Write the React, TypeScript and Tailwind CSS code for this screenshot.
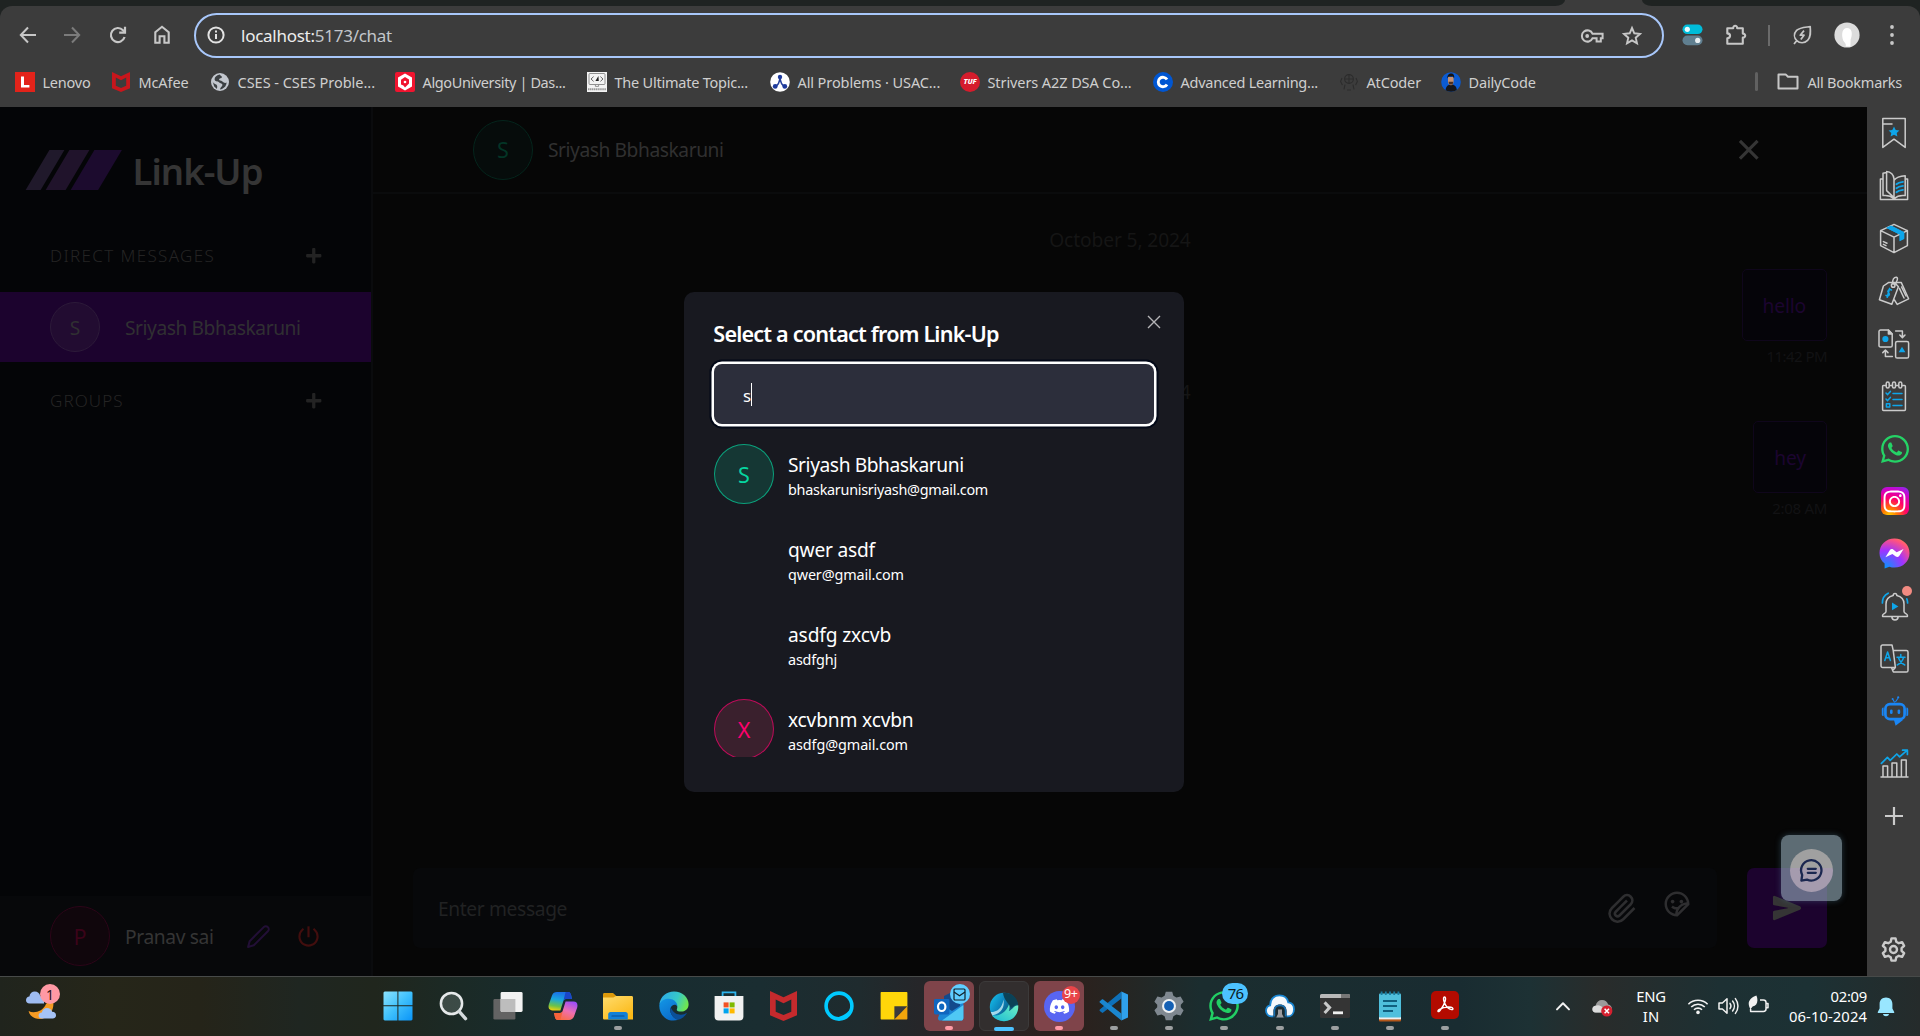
import type { ReactNode } from "react";
import { FaDiscord, FaInstagram, FaPlus, FaWhatsapp } from "react-icons/fa";
import { FiEdit2 } from "react-icons/fi";
import { GrAttachment } from "react-icons/gr";
import { IoPowerSharp, IoSend } from "react-icons/io5";
import { RiCloseFill, RiEmojiStickerLine } from "react-icons/ri";

/* ---------- shared marks ---------- */

function McAfeeMark({ color, className }: { color: string; className: string }) {
  return (
    <svg viewBox="0 0 18 20" className={className} preserveAspectRatio="none">
      <path
        fill={color}
        fillRule="evenodd"
        d="M0 0L9 4.2L18 0V16.2L9 20L0 16.2ZM3.8 5.6V13.8L9 16L14.2 13.8V5.6L9 8.2Z"
      />
    </svg>
  );
}

/* ---------- browser toolbar ---------- */

function TabStrip() {
  return (
    <div className="flex h-[6px] shrink-0 bg-[#3c3c3c]">
      <div className="w-[1565px] rounded-br-[10px_6px] bg-[#1f2322]" />
      <div className="w-[77px]" />
      <div className="flex-1 rounded-bl-[10px_6px] bg-[#1f2322]" />
    </div>
  );
}

function Toolbar() {
  return (
    <div className="bg-[#1f2322]">
      <div className="flex h-[58px] items-center rounded-t-[12px] bg-[#3c3c3c] pl-[17px] text-[#c7c7c7]">
        <svg width="22" height="22" viewBox="0 0 22 22" fill="none" stroke="currentColor" strokeWidth="2">
          <path d="M19 11H4M11 3.5L3.8 11L11 18.5" />
        </svg>
        <svg className="ml-[22px] text-[#7b7b7b]" width="22" height="22" viewBox="0 0 22 22" fill="none" stroke="currentColor" strokeWidth="2">
          <path d="M3 11H18M11 3.5L18.2 11L11 18.5" />
        </svg>
        <svg className="ml-[24px]" width="22" height="22" viewBox="0 0 22 22" fill="none" stroke="currentColor" strokeWidth="2.2">
          <path d="M17.6 13A7 7 0 1 1 16 6.2L18 8.4" />
          <path d="M18 2.8V8.6H12.2" />
        </svg>
        <svg className="ml-[22px]" width="22" height="22" viewBox="0 0 22 22" fill="none" stroke="currentColor" strokeWidth="2.1">
          <path d="M4.3 18.8V8.2L11 2.8L17.7 8.2V18.8H13.4V12.2H8.6V18.8Z" />
        </svg>
        <div className="ml-[21px] flex h-[45px] w-[1470px] items-center rounded-full border-[2.5px] border-[#a8c7fa] pl-[11px]">
          <svg width="18" height="18" viewBox="0 0 18 18" fill="none" stroke="#e3e3e3" strokeWidth="2">
            <circle cx="9" cy="9" r="7.6" />
            <path d="M9 8V13M9 4.6V6.5" />
          </svg>
          <span className="ml-[16px] mt-[1px] text-[17px] leading-5 tracking-[-0.26px] text-[#c3c6cb]">
            <span className="text-[#ededed]">localhost:</span>5173/chat
          </span>
          <svg className="ml-auto mt-[1px]" width="24" height="16" viewBox="0 0 24 16" fill="none" stroke="#c7c7c7" strokeWidth="2">
            <path d="M12.6 5.8H22.6V10.2H20.8V13.4H16.6V10.2H12.6A5.6 5.6 0 1 1 12.6 5.8Z" />
            <circle cx="7.2" cy="8" r="1.9" fill="#c7c7c7" stroke="none" />
          </svg>
          <svg className="ml-[17px] mr-[19px] mt-[1px]" width="22" height="22" viewBox="0 0 22 22" fill="none" stroke="#c7c7c7" strokeWidth="1.9">
            <path d="M11 3L13.3 8.3L19 8.9L14.7 12.7L16 18.4L11 15.4L6 18.4L7.3 12.7L3 8.9L8.7 8.3Z" />
          </svg>
        </div>
        <svg className="ml-[18px]" width="21" height="22" viewBox="0 0 21 22">
          <rect x="0.5" y="0.5" width="20" height="9.6" rx="4.8" fill="#00bcd9" />
          <circle cx="5.3" cy="5.3" r="2.6" fill="#e6fbff" />
          <rect x="0.5" y="11.6" width="20" height="9.6" rx="4.8" fill="#607f90" />
          <circle cx="15.7" cy="16.4" r="2.6" fill="#e8eef1" />
        </svg>
        <svg className="ml-[21px]" width="24" height="24" viewBox="0 0 24 24" fill="none" stroke="#c7c7c7" strokeWidth="2.1" strokeLinejoin="round">
          <path d="M3.3 5.2H9.2C9 2 13.4 2 13.2 5.2H18.8V10.6C22 10.4 22 14.8 18.8 14.6V20.8H3.3V15.4C7 14.8 7 10.8 3.3 10.4Z" />
        </svg>
        <div className="ml-[20px] h-[21px] w-[1.5px] bg-[#6b6b6b]" />
        <svg className="ml-[21px]" width="22" height="24" viewBox="0 0 22 24" fill="none" stroke="#c7c7c7" strokeWidth="1.7" strokeLinejoin="round">
          <path d="M19.2 3.6C19.6 9 20 14 16.6 17.4C13.4 20.6 8.6 20.4 5.8 17.6C3 14.8 2.6 10.6 5.6 7.4C8.6 4.4 13.6 4.4 19.2 3.6ZM5.8 17.6L3 21" />
          <path d="M13 7.6L9.2 12.2H13L9.8 16.6" />
        </svg>
        <svg className="ml-[21px]" width="26" height="26" viewBox="0 0 26 26">
          <circle cx="13" cy="13" r="12.6" fill="#dcdcdc" />
          <path d="M9.2 18.5C7 12 8.4 6 13 6C18.2 6 18.8 12.4 16.6 17.4L16.4 24.6H11.6C12.6 21.8 10.4 20.6 9.2 18.5Z" fill="#fff" />
        </svg>
        <svg className="ml-[29px]" width="6" height="22" viewBox="0 0 6 22" fill="#c7c7c7">
          <circle cx="3" cy="3" r="1.9" />
          <circle cx="3" cy="11" r="1.9" />
          <circle cx="3" cy="19" r="1.9" />
        </svg>
      </div>
    </div>
  );
}

const favicons = {
  lenovo: (
    <svg viewBox="0 0 20 20" className="size-5">
      <rect width="20" height="20" fill="#e2231a" />
      <path d="M6 4.4H9V13H14.4V15.6H6Z" fill="#fff" />
    </svg>
  ),
  mcafee: <McAfeeMark color="#c8161c" className="mx-px h-5 w-[18px]" />,
  globe: (
    <svg viewBox="0 0 20 20" className="size-5">
      <circle cx="10" cy="10" r="9" fill="#c3c7ce" />
      <path d="M9.6 2.4C6.4 3.4 4.4 5 4.6 7.4C5 9.6 7.4 8.8 9 10.2C10.2 11.4 12.6 11.2 12.4 13.2C12 14.8 10.4 15 10 17.4L12 17C14.6 15.8 16.6 13.6 16.6 10.6C14.8 11.4 13.6 10.4 12.4 9.4C11 8.6 9.4 8.8 9 7.6C9.2 6.2 11.6 6.6 12 5C12 4 10.4 3.6 9.6 2.4Z" fill="#3c4043" />
      <path d="M2.6 9.6C4 12.6 6.2 11.8 7 13.4C7.6 15 6.8 15.8 7 17L4.2 14.6Z" fill="#3c4043" />
    </svg>
  ),
  algo: (
    <svg viewBox="0 0 20 20" className="size-5">
      <rect width="20" height="20" rx="2" fill="#f0142f" />
      <path d="M10 1.4L17 5.6V14.4L10 18.6L3 14.4V5.6Z" fill="#fff" />
      <path d="M10 5L14 7.6V11.6L10 15.4L8.4 13.4L6 12.6V7.8Z" fill="#f0142f" />
      <circle cx="10" cy="10" r="1.3" fill="#fff" />
    </svg>
  ),
  topics: (
    <svg viewBox="0 0 20 20" className="size-5">
      <rect width="20" height="20" fill="#f3f3f3" />
      <rect x="2" y="1.5" width="16" height="11" rx="1" fill="none" stroke="#777" strokeWidth="0.8" />
      <path d="M6.6 4.6L4 7L6.6 9.4M13.4 4.6L16 7L13.4 9.4" stroke="#555" strokeWidth="0.9" fill="none" />
      <path d="M8.4 9L11.4 4L11.8 9Z" fill="#222" />
      <path d="M8.4 12.6V14.4H11.6V12.6" stroke="#888" strokeWidth="0.9" fill="none" />
      <path d="M1 17.2H19" stroke="#999" strokeWidth="2" strokeDasharray="1.4 0.5" fill="none" />
    </svg>
  ),
  usaco: (
    <svg viewBox="0 0 20 20" className="size-5">
      <circle cx="10" cy="10" r="9.8" fill="#fff" />
      <path d="M5.4 14.4C8 13.4 9.6 10 10 5.4C10.4 10 12 13.4 14.6 14.4" fill="none" stroke="#26409a" strokeWidth="1.5" />
      <circle cx="10" cy="5" r="2.2" fill="#1e3a9c" />
      <circle cx="5.2" cy="14.4" r="2.4" fill="#1e3a9c" />
      <circle cx="14.8" cy="14.4" r="2.4" fill="#1e3a9c" />
    </svg>
  ),
  tuf: (
    <span className="flex size-5 items-center justify-center rounded-full bg-[#d51c2c] text-[7.5px] font-extrabold italic leading-none tracking-[-0.2px] text-white">
      TUF
    </span>
  ),
  coursera: (
    <svg viewBox="0 0 20 20" className="size-5">
      <circle cx="10" cy="10" r="10" fill="#0056d2" />
      <path d="M14 7.6A4.7 4.7 0 1 0 14 12.4" fill="none" stroke="#fff" strokeWidth="2.9" />
    </svg>
  ),
  atcoder: (
    <svg viewBox="0 0 20 20" className="size-5" fill="none" stroke="#2c2c2c" strokeWidth="1.1">
      <circle cx="10" cy="7" r="4.4" />
      <path d="M10 2.6V11.4M6 7H14M3 6L1.6 9.4L3.4 13M17 6L18.4 9.4L16.6 13M6 12.6L5 17.4M14 12.6L15 17.4M8 18H12" />
    </svg>
  ),
  daily: (
    <svg viewBox="0 0 20 20" className="size-5">
      <clipPath id="dailyClip">
        <circle cx="10" cy="10" r="9.8" />
      </clipPath>
      <g clipPath="url(#dailyClip)">
        <rect width="20" height="20" fill="#0b5bd3" />
        <path d="M4.5 20C4.5 14.4 6.6 12.4 10 12.4C13.8 12.4 16 14.6 16 20Z" fill="#15161b" />
        <path d="M7 5H12.6V10C12.4 12 11.4 13.2 10 13.2C8.4 13.2 7.2 12 7 10Z" fill="#c69374" />
        <path d="M6.4 6.6C6 2.8 8 1.4 10 1.4C12.6 1.4 13.8 3.4 13 6.6L12 4.6H7.6Z" fill="#17130f" />
        <path d="M7.4 9.8H12.4L11.6 12.6H8.4Z" fill="#4a3023" />
      </g>
    </svg>
  ),
};

function Bookmark({ icon, width, children }: { icon: ReactNode; width: string; children: ReactNode }) {
  return (
    <div className={`flex shrink-0 items-center gap-[7.5px] whitespace-nowrap ${width}`}>
      <span className="flex size-5 shrink-0 items-center justify-center">{icon}</span>
      {children}
    </div>
  );
}

function BookmarksBar() {
  return (
    <div className="flex h-[43px] shrink-0 items-center bg-[#3c3c3c] pb-[8px] pl-[15px] text-[14.5px] leading-5 text-[#cfcfcf]">
      <Bookmark icon={favicons.lenovo} width="w-[96px]"><span className="tracking-[-0.23px]">Lenovo</span></Bookmark>
      <Bookmark icon={favicons.mcafee} width="w-[99px]"><span className="tracking-[-0.12px]">McAfee</span></Bookmark>
      <Bookmark icon={favicons.globe} width="w-[185px]"><span className="tracking-[-0.02px]">CSES - CSES Proble...</span></Bookmark>
      <Bookmark icon={favicons.algo} width="w-[192px]"><span className="tracking-[-0.38px]">AlgoUniversity | Das...</span></Bookmark>
      <Bookmark icon={favicons.topics} width="w-[183px]"><span className="tracking-[-0.23px]">The Ultimate Topic...</span></Bookmark>
      <Bookmark icon={favicons.usaco} width="w-[190px]"><span className="tracking-[-0.1px]">All Problems · USAC...</span></Bookmark>
      <Bookmark icon={favicons.tuf} width="w-[193px]"><span className="tracking-[-0.09px]">Strivers A2Z DSA Co...</span></Bookmark>
      <Bookmark icon={favicons.coursera} width="w-[186px]"><span className="tracking-[-0.26px]">Advanced Learning...</span></Bookmark>
      <Bookmark icon={favicons.atcoder} width="w-[102px]"><span className="tracking-[-0.15px]">AtCoder</span></Bookmark>
      <Bookmark icon={favicons.daily} width="w-[100px]"><span className="tracking-[-0.15px]">DailyCode</span></Bookmark>
      <div className="ml-auto h-[19px] w-[2.5px] rounded-full bg-[#616161]" />
      <svg className="ml-[19px]" width="22" height="20" viewBox="0 0 22 20" fill="none" stroke="#c7c7c7" strokeWidth="2">
        <path d="M1.5 3.4V16.6H20.5V4.8H11L8.6 2.4H1.5Z" strokeLinejoin="round" />
      </svg>
      <span className="ml-[9px] mr-[18px] tracking-[-0.24px]">All Bookmarks</span>
    </div>
  );
}

/* ---------- chat page ---------- */

function SectionTitle({ children }: { children: ReactNode }) {
  return (
    <div className="flex h-[50px] items-center justify-between pl-[50px] pr-[49px] text-[17px] font-light leading-5 text-[#242424]">
      {children}
      <FaPlus className="size-[17.5px] text-[#232323]" />
    </div>
  );
}

function Sidebar() {
  return (
    <aside className="flex w-[373px] shrink-0 flex-col border-r-[2.5px] border-[#0a0b0d] bg-[#040507]">
      <div className="mt-[43px] flex h-10 items-center pl-[25px]">
        <svg width="97.5" height="40" viewBox="0 0 78 32" fill="none">
          <path d="M55.5 0H77.5L58.5 32H36.5L55.5 0Z" fill="#1c0b2e" />
          <path d="M35.5 0H51.5L32.5 32H16.5L35.5 0Z" fill="#20132b" />
          <path d="M19.5 0H31.5L12.5 32H0.5L19.5 0Z" fill="#20192b" />
        </svg>
        <span className="ml-[10px] mt-[2px] text-[36.5px] font-semibold leading-10 tracking-[-0.97px] text-[#353535]">Link-Up</span>
      </div>
      <div className="mt-[41px]">
        <SectionTitle><span className="tracking-[1.35px]">DIRECT MESSAGES</span></SectionTitle>
      </div>
      <div className="mt-[11px] flex h-[70px] items-center bg-[#1c032e] pl-[50px] text-[19.2px] leading-[30px] text-[#303032]">
        <div className="flex size-[50px] items-center justify-center rounded-full border border-[#2c1a39] bg-[#220c31] pt-[2px]">S</div>
        <span className="ml-[25px] mt-[2px] tracking-[-0.43px]">Sriyash Bbhaskaruni</span>
      </div>
      <div className="mt-[14px]">
        <SectionTitle><span className="tracking-[1.1px]">GROUPS</span></SectionTitle>
      </div>
      <div className="mt-auto flex h-20 items-center bg-[#07080a] pl-[50px]">
        <div className="flex size-[60px] items-center justify-center rounded-full border border-[#2c0418] bg-[#10060c] pt-[2px] text-[21.5px] text-[#3a0319]">P</div>
        <span className="ml-[15px] mt-[2px] w-[121px] text-[19.2px] leading-[30px] tracking-[-0.37px] text-[#353535]">Pranav sai</span>
        <FiEdit2 className="size-[25px] text-[#220f36]" />
        <IoPowerSharp className="ml-[25px] size-[25px] text-[#420e0e]" />
      </div>
    </aside>
  );
}

function Message({ children, time, tracking }: { children: ReactNode; time: string; tracking: string }) {
  return (
    <div className="flex flex-col items-end">
      <div className="flex h-[72px] items-center rounded-[5px] border border-[#0f061b] bg-[#050409] px-[20px] pt-[2px] text-[19.2px] tracking-[-0.15px] text-[#1c0530]">
        {children}
      </div>
      <div className={`mt-[5px] text-[15px] leading-5 text-[#121214] ${tracking}`}>{time}</div>
    </div>
  );
}

function Conversation() {
  return (
    <main className="flex min-w-0 flex-1 flex-col bg-[#060606]">
      <header className="flex h-[87px] shrink-0 items-center border-b-[2.5px] border-[#0a0b0c] pl-[100px] pr-[100px]">
        <div className="flex size-[60px] items-center justify-center rounded-full border border-[#04251c] bg-[#060c0b] pt-[2px] text-[21.5px] text-[#033526]">S</div>
        <span className="ml-[15px] mt-[1px] text-[19.2px] leading-[30px] tracking-[-0.43px] text-[#303030]">Sriyash Bbhaskaruni</span>
        <RiCloseFill className="ml-auto size-[37.5px] text-[#353535]" />
      </header>
      <div className="flex flex-1 flex-col pl-[40px] pr-[40px] pt-[31px]">
        <div className="text-center text-[19.2px] leading-[30px] tracking-[-0.12px] text-[#151515]">October 5, 2024</div>
        <div className="mt-[14px]">
          <Message time="11:42 PM" tracking="tracking-[-0.55px]">hello</Message>
        </div>
        <div className="mt-[11px] text-center text-[19.2px] leading-[30px] tracking-[-0.12px] text-[#151515]">October 6, 2024</div>
        <div className="mt-[14px]">
          <Message time="2:08 AM" tracking="tracking-[-0.3px]">hey</Message>
        </div>
      </div>
      <div className="mb-[28px] flex h-20 shrink-0 gap-[30px] pl-[40px] pr-[40px]">
        <div className="flex flex-1 items-center rounded-[7px] bg-[#07080a] pl-[25px] text-[19.2px] leading-[30px] text-[#212223]">
          <span className="mt-[2px] tracking-[-0.36px]">Enter message</span>
          <GrAttachment className="ml-auto size-[30px] [&_path]:stroke-[#2e2e30]" />
          <RiEmojiStickerLine className="mb-[9px] ml-[25px] mr-[25px] size-[30px] text-[#2e2e30]" />
        </div>
        <div className="flex w-20 items-center justify-center rounded-[7px] bg-[#1c032e]">
          <IoSend className="size-[30px] text-[#353535]" />
        </div>
      </div>
    </main>
  );
}

const contacts = [
  { name: "Sriyash Bbhaskaruni", mail: "bhaskarunisriyash@gmail.com", nameFit: "tracking-[-0.42px]", mailFit: "tracking-[-0.27px]", letter: "S", tone: "border-[#06d6a0aa] bg-[#06d6a02a] text-[#06d6a0]" },
  { name: "qwer asdf", mail: "qwer@gmail.com", nameFit: "tracking-[-0.22px]", mailFit: "tracking-[-0.14px]", letter: "", tone: "border-transparent" },
  { name: "asdfg zxcvb", mail: "asdfghj", nameFit: "tracking-[-0.15px]", mailFit: "tracking-[-0.18px]", letter: "", tone: "border-transparent" },
  { name: "xcvbnm xcvbn", mail: "asdfg@gmail.com", nameFit: "tracking-[-0.18px]", mailFit: "tracking-[-0.09px]", letter: "X", tone: "border-[#ff006faa] bg-[#3a202d] text-[#ff006e]" },
];

function ContactDialog() {
  return (
    <div className="absolute left-[684px] top-[185px] flex size-[500px] flex-col rounded-[10px] bg-[#181920] p-[30px] text-white">
      <h2 className="-ml-[0.7px] mt-[1px] whitespace-nowrap text-[21.6px] font-semibold leading-[22.5px] tracking-[-0.81px]">Select a contact from Link-Up</h2>
      <svg className="absolute right-[23px] top-[23px]" width="14" height="14" viewBox="0 0 14 14" stroke="#b4b4b7" strokeWidth="1.4">
        <path d="M1 1L13 13M13 1L1 13" />
      </svg>
      <div className="mt-[18.5px] flex h-[60px] shrink-0 items-center rounded-[8px] bg-[#2c2e3b] pl-[29px] text-[16.8px] leading-5 shadow-[0_0_0_2.5px_#fff,0_0_0_4.5px_#020817]">
        <span className="mt-[3px]">s</span>
        <span className="h-[23px] w-[1.25px] bg-white" />
      </div>
      <div className="mt-[20px] flex h-[313px] flex-col gap-[25px] overflow-hidden">
        {contacts.map((c) => (
          <div key={c.mail} className="flex h-[60px] shrink-0 items-center gap-[14px]">
            <div className={`flex size-[60px] items-center justify-center rounded-full border pt-[2px] text-[21.5px] ${c.tone}`}>{c.letter}</div>
            <div className="flex flex-col pt-[1px]">
              <span className={`text-[19.2px] leading-[30px] ${c.nameFit}`}>{c.name}</span>
              <span className={`text-[14.4px] leading-5 ${c.mailFit}`}>{c.mail}</span>
            </div>
          </div>
        ))}
      </div>
    </div>
  );
}

function FloatingWidget() {
  return (
    <div className="absolute left-[1781px] top-[728px] flex h-[66px] w-[61px] items-center justify-center rounded-[8px] bg-[#a5c1d08c] pt-[5px] shadow-[0_0_6px_#4f7f9966]">
      <div className="flex size-[43px] items-center justify-center rounded-full bg-[linear-gradient(#a0a0a0_0_44%,#a59bae_44%)]">
        <svg width="25" height="25" viewBox="0 0 25 25" fill="none" stroke="#1b2750" strokeWidth="2.3" strokeLinecap="round" strokeLinejoin="round">
          <path d="M2.4 22.6L3.2 17A10.2 10.2 0 1 1 8 21.6Z" />
          <path d="M8.8 10.8H16.8M8.8 14.8H16.8" />
        </svg>
      </div>
    </div>
  );
}

/* ---------- browser side panel ---------- */

const line = { fill: "none", stroke: "#cbcbcb", strokeWidth: 1.5, strokeLinejoin: "round" as const, strokeLinecap: "round" as const };

const sideIcons: ReactNode[] = [
  <svg key="bookmark" width="26" height="32" viewBox="0 0 26 32" {...line}>
    <path d="M1.8 1.6H24.2V30.4L13 22.2L1.8 30.4ZM2 7H11" />
    <path d="M13 9.4L14.7 13L18.4 13.4L15.7 15.9L16.4 19.6L13 17.7L9.6 19.6L10.3 15.9L7.6 13.4L11.3 13Z" fill="#0ea5e9" stroke="none" />
  </svg>,
  <svg key="book" width="30" height="31" viewBox="0 0 30 31" {...line}>
    <path d="M4 9H1.4V29.6H28.6V9H26.4M4 25.6V3.2L7.6 2.4V20.6L15 27.6V9C15 5 11.6 1.4 7.6 1.4M4 25.6C8.6 25 12 26 15 28.6C18 26 21.6 25 26.2 25.6V5.8C21.6 6 17.4 7 15 10.4" />
    <path d="M17.4 14.2C19 12.8 21 12.2 24 11.8M17.4 18.2C19 16.8 21 16.2 24 15.8M17.4 22.2C19 20.8 21 20.2 24 19.8" stroke="#0ea5e9" strokeWidth="1.8" />
  </svg>,
  <svg key="box" width="30" height="31" viewBox="0 0 30 31" {...line}>
    <path d="M7 4.8L12 2.6L25.2 9.2V15.4L20.6 18V11.6Z" fill="#0ea5e9" stroke="none" />
    <path d="M15 1.4L28.4 7.6V22.6L15 29.6L1.6 22.6V7.6ZM1.6 7.6L15 14.2L28.4 7.6M15 14.2V29.6M4.4 18.6L8 20.2M4.4 21.4L7 22.6" />
    <path d="M7 4.8L12 2.6L25.2 9.2V16L20.6 18.2V11.6Z" fill="#0ea5e9" stroke="none" />
  </svg>,
  <svg key="tags" width="32" height="30" viewBox="0 0 32 30" {...line}>
    <path d="M10.4 6.6H16.6L20.4 10.8L13.8 28.2L1.4 23.8L5.4 10ZM17.6 6.4H23.2L30.6 22.8L19.2 28.4L16.4 23.8" />
    <circle cx="15.2" cy="9.4" r="1.8" />
    <path d="M15 8C13.6 3.6 16.4 1 18.4 1.2C20.6 1.8 19 6 16.4 8.6M21.4 12.4L26 22M23.6 11L28 20" />
    <path d="M13.4 14C11 12.6 8.8 15 10.6 16.8C12.4 18.4 10.6 21 8 19.4M11.6 12.4L9.2 21.2" stroke="#0ea5e9" strokeWidth="1.6" />
  </svg>,
  <svg key="swap" width="32" height="30" viewBox="0 0 32 30" {...line}>
    <path d="M2.6 1H10.4L14.2 5V16.4C14.2 17.4 13.6 18 12.6 18H2.6C1.6 18 1 17.4 1 16.4V2.6C1 1.6 1.6 1 2.6 1Z" />
    <path d="M10.4 1V5H14.2Z" fill="#cbcbcb" />
    <rect x="17.6" y="12.4" width="13" height="16.6" rx="1.6" />
    <circle cx="7.4" cy="10" r="3.1" fill="#0ea5e9" stroke="none" />
    <path d="M24 17.8L27.4 23.2H20.6Z" fill="#0ea5e9" stroke="none" />
    <path d="M17.6 2H24.4V8M21.8 6L24.4 8.6L27 6M14.4 27.6H7.4V21.4M4.8 23.6L7.4 21L10 23.6" />
  </svg>,
  <svg key="tasks" width="26" height="31" viewBox="0 0 26 31" {...line}>
    <rect x="1.6" y="4.6" width="22.8" height="24.8" rx="0.8" />
    <rect x="5.2" y="1" width="3" height="6" rx="1.5" fill="#3c3c3c" />
    <rect x="11.5" y="1" width="3" height="6" rx="1.5" fill="#3c3c3c" />
    <rect x="17.8" y="1" width="3" height="6" rx="1.5" fill="#3c3c3c" />
    <path d="M5 12L6.6 13.6L9.4 10.4M5 18L6.6 19.6L9.4 16.4M5.4 22.8H8.8V26H5.4ZM12 12.6H21M12 18.6H21M12 24.4H21" stroke="#0ea5e9" />
  </svg>,
  <FaWhatsapp key="whatsapp" className="ml-[2px] size-[32px] text-[#25d366]" />,
  <span key="instagram" className="ml-[2px] flex size-[28px] items-center justify-center rounded-[6px] bg-[radial-gradient(circle_at_30%_105%,#ffd600_0%,#ff7a00_22%,#ff0169_50%,#d300c5_75%,#7638fa_100%)]">
    <FaInstagram className="size-[25px] text-white" />
  </span>,
  <svg key="messenger" className="-mt-[2px] ml-[1px]" width="31" height="31" viewBox="0 0 31 31">
    <defs>
      <radialGradient id="msgr" cx="0.2" cy="1" r="1.1">
        <stop offset="0" stopColor="#0099ff" />
        <stop offset="0.55" stopColor="#a033ff" />
        <stop offset="0.9" stopColor="#ff5280" />
        <stop offset="1" stopColor="#ff7061" />
      </radialGradient>
    </defs>
    <path d="M15.5 0.5C7 0.5 0.5 6.8 0.5 15C0.5 19.4 2.4 23 5.6 25.6V30.6L10.4 28.8C12 29.4 13.6 29.6 15.5 29.6C24 29.6 30.5 23.2 30.5 15C30.5 6.8 24 0.5 15.5 0.5Z" fill="url(#msgr)" />
    <path d="M6.4 19.2L10.8 12.2C11.6 11 13 10.8 14.2 11.6L17.6 14.2L24.6 11L20.2 18C19.4 19.2 18 19.4 16.8 18.6L13.4 16Z" fill="#fff" />
  </svg>,
  <div key="bell" className="relative -mt-[2px] ml-[2px]">
    <svg width="28" height="30" viewBox="0 0 28 30" {...line}>
      <path d="M14 2.6C12.8 2.6 12.2 3.4 12.2 4.4C7.4 5.4 5 9 5 13V20.4C5 22.4 1.6 22.6 1.6 24.2V25.4H26.4V24.2C26.4 22.6 23 22.4 23 20.4V13C23 9 20.6 5.4 15.8 4.4C15.8 3.4 15.2 2.6 14 2.6ZM10.8 25.6C11 30 17 30 17.2 25.6" />
      <path d="M11 11.6L17.4 15.4L11 19.2Z" fill="#0ea5e9" stroke="none" />
      <path d="M7.2 2.2C3.4 4 1.4 7.4 1.4 12M26.6 12C26.6 10.4 26.2 9 25.8 7.8" stroke="#0ea5e9" strokeWidth="1.7" />
    </svg>
    <span className="absolute -right-[3px] -top-[5px] size-[10px] rounded-full bg-[#f28b82]" />
  </div>,
  <svg key="translate" className="-mt-[1px] ml-[2px]" width="29" height="29" viewBox="0 0 29 29" {...line}>
    <path d="M2.6 1H12L13.2 6.4H26.4C27.4 6.4 28 7 28 8V26.4C28 27.4 27.4 28 26.4 28H13.4L11.4 23.4H2.6C1.6 23.4 1 22.8 1 21.8V2.6C1 1.6 1.6 1 2.6 1ZM13.2 6.4L15.4 23.4H11.4M15.4 23.4L12.6 26.6" />
    <path d="M4.8 16.6L7.6 8L10.4 16.6M5.8 13.8H9.4M20.8 10.6V13M17 13.2H25M18.4 13.6C19.6 17.4 21.6 19.6 24.8 21M23.6 13.6C22.4 17.4 20.4 19.6 17.2 21" stroke="#0ea5e9" />
  </svg>,
  <svg key="robot" className="-mt-[1px] ml-[2px]" width="28" height="30" viewBox="0 0 28 30">
    <rect x="4.4" y="8.2" width="19.2" height="15" rx="4.6" fill="none" stroke="#1a86f5" strokeWidth="2.7" />
    <path d="M0.8 13C0.8 12 1.6 11.4 2.6 11.4V20C1.6 20 0.8 19.4 0.8 18.4ZM27.2 13C27.2 12 26.4 11.4 25.4 11.4V20C26.4 20 27.2 19.4 27.2 18.4ZM13 24H22L14.6 29.8Z" fill="#1a86f5" />
    <rect x="9" y="13.4" width="2.6" height="4.6" rx="1.3" fill="#1a86f5" />
    <rect x="16.6" y="13.4" width="2.6" height="4.6" rx="1.3" fill="#1a86f5" />
    <path d="M13.6 6.6L12 3.6M14.4 6L17 2.2" stroke="#1a86f5" strokeWidth="1.1" />
    <circle cx="11.6" cy="3" r="1" fill="#1a86f5" />
    <circle cx="17.2" cy="1.4" r="1.1" fill="#1a86f5" />
  </svg>,
  <svg key="chart" className="-mt-[2px] ml-[2px]" width="29" height="29" viewBox="0 0 29 29" {...line}>
    <path d="M1 28H28M3 28V17H7.6V28M12 28V14H16.8V28M21.4 28V11H26.2V28" />
    <path d="M1.4 14.4L7.4 8.4L10.2 11.4L16.8 5L19.6 7.8L27 1.4M22.6 1.2H27.4V5.4" stroke="#0ea5e9" strokeWidth="1.7" />
  </svg>,
  <svg key="add" className="-mt-[2px]" width="18" height="18" viewBox="0 0 18 18" stroke="#cbcbcb" strokeWidth="2.2">
    <path d="M9 0V18M0 9H18" />
  </svg>,
];

function SidePanel() {
  return (
    <div className="flex w-[53px] shrink-0 flex-col items-center bg-[#3c3c3c]">
      {sideIcons.map((icon, i) => (
        <div key={i} className="flex h-[52.6px] shrink-0 items-center justify-center">{icon}</div>
      ))}
      <svg className="mb-[12px] mt-auto" width="29" height="29" viewBox="0 0 24 24" fill="none" stroke="#cbcbcb" strokeWidth="2">
        <path strokeLinejoin="round" d="M10.3 2.8H13.7L14.3 5.6L16.4 6.8L19.1 5.9L20.8 8.9L18.7 10.8V13.2L20.8 15.1L19.1 18.1L16.4 17.2L14.3 18.4L13.7 21.2H10.3L9.7 18.4L7.6 17.2L4.9 18.1L3.2 15.1L5.3 13.2V10.8L3.2 8.9L4.9 5.9L7.6 6.8L9.7 5.6Z" />
        <circle cx="12" cy="12" r="2.9" />
      </svg>
    </div>
  );
}

/* ---------- taskbar ---------- */

type App = { id: string; icon: ReactNode; tile?: string; dot?: string };

const apps: App[] = [
  {
    id: "start",
    icon: (
      <svg width="30" height="30" viewBox="0 0 30 30">
        <defs>
          <linearGradient id="win" x1="0" y1="0" x2="1" y2="1">
            <stop offset="0" stopColor="#8ce3ff" />
            <stop offset="0.5" stopColor="#3fc0fc" />
            <stop offset="1" stopColor="#0a94f8" />
          </linearGradient>
        </defs>
        <path d="M1.6 0.5H14.4V14.3H0.5V1.6ZM15.4 0.5H28.4L29.5 1.6V14.3H15.4ZM0.5 15.3H14.4V29.5H1.6L0.5 28.4ZM15.4 15.3H29.5V28.4L28.4 29.5H15.4Z" fill="url(#win)" />
      </svg>
    ),
  },
  {
    id: "search",
    icon: (
      <svg width="30" height="30" viewBox="0 0 30 30" fill="none">
        <circle cx="13.5" cy="12.5" r="10.6" fill="#8b99964d" stroke="#e6e9ea" strokeWidth="2.5" />
        <path d="M21.1 20.4L27.5 27.6" stroke="#d4dadc" strokeWidth="3.4" strokeLinecap="round" />
      </svg>
    ),
  },
  {
    id: "taskview",
    icon: (
      <svg width="30" height="30" viewBox="0 0 30 30">
        <rect x="0.4" y="8" width="22" height="20.6" rx="1.4" fill="#636363" />
        <rect x="7.6" y="1" width="22" height="20" rx="1.4" fill="#f2f2f2" />
        <path d="M7.6 8H22.4V21H9A1.4 1.4 0 0 1 7.6 19.6Z" fill="#bdbdbd" />
      </svg>
    ),
  },
  {
    id: "copilot",
    icon: (
      <svg width="30" height="30" viewBox="0 0 30 30">
        <defs>
          <linearGradient id="cpA" x1="0.4" y1="0" x2="0.2" y2="1">
            <stop offset="0" stopColor="#1b6fe8" />
            <stop offset="0.4" stopColor="#19a7dd" />
            <stop offset="0.75" stopColor="#6cc24a" />
            <stop offset="1" stopColor="#f4d20b" />
          </linearGradient>
          <linearGradient id="cpB" x1="0.8" y1="0" x2="0.3" y2="1">
            <stop offset="0" stopColor="#9a4dfa" />
            <stop offset="0.5" stopColor="#ee6fb0" />
            <stop offset="1" stopColor="#fb6b41" />
          </linearGradient>
        </defs>
        <path d="M9 1H20C22.4 1 23 3 23.6 6.4L24 8H18C16.4 8 15.6 9 15.2 10.4L12.4 19.4H4.6C1 19.4 0 17 0.8 13.6L4 4.4C5 2 6.6 1 9 1Z" fill="url(#cpA)" />
        <path d="M17.6 1H20C22.4 1 23 3 23.6 6.4L24 8H18C16.4 8 15.8 8.8 15.2 10.4Z" fill="#1a45c9" />
        <path d="M21 29H10C7.6 29 7 27 6.4 23.6L6 22H12C13.6 22 14.4 21 14.8 19.6L17.6 10.6H25.4C29 10.6 30 13 29.2 16.4L26 25.6C25 28 23.4 29 21 29Z" fill="url(#cpB)" />
        <path d="M12.4 29H10C7.6 29 7 27 6.4 23.6L6 22H12C13.6 22 14.2 21.2 14.8 19.6Z" fill="#f4623a" />
      </svg>
    ),
  },
  {
    id: "explorer",
    dot: "bg-[#9c9fa0]",
    icon: (
      <svg width="30" height="30" viewBox="0 0 30 30">
        <defs>
          <linearGradient id="fold" x1="0" y1="0" x2="0.7" y2="1">
            <stop offset="0" stopColor="#ffdc6d" />
            <stop offset="1" stopColor="#fbb917" />
          </linearGradient>
        </defs>
        <path d="M0 3.4C0 2.6 0.6 2 1.4 2H10L13.4 5V10H0Z" fill="#dd9a0b" />
        <path d="M0 6.6H10.4L13 5H28.6C29.4 5 30 5.6 30 6.4V28.6H1.4C0.6 28.6 0 28 0 27.2Z" fill="url(#fold)" />
        <path d="M5.2 28.6V23.4C5.2 22 6 21 7.6 21H22.4C24 21 24.8 22 24.8 23.4V28.6Z" fill="#1280d6" />
        <path d="M9 25H21" stroke="#0a4d93" strokeWidth="1.2" strokeLinecap="round" />
      </svg>
    ),
  },
  {
    id: "edge",
    icon: (
      <svg width="30" height="30" viewBox="0 0 30 30">
        <defs>
          <linearGradient id="edgeA" x1="0" y1="0.2" x2="1" y2="0.5">
            <stop offset="0" stopColor="#2ba8ea" />
            <stop offset="0.6" stopColor="#37c9c8" />
            <stop offset="1" stopColor="#70e64e" />
          </linearGradient>
          <linearGradient id="edgeB" x1="0" y1="0" x2="0.6" y2="1">
            <stop offset="0" stopColor="#1397e6" />
            <stop offset="1" stopColor="#0b6ccb" />
          </linearGradient>
        </defs>
        <path d="M0.4 13C1.4 5.6 7.4 0.4 15 0.4C23.4 0.4 29.6 6.4 29.6 13.2C29.6 18 26 20.6 22 20.6C19 20.6 17.4 19.6 17.8 18.4C19.4 15 17.4 11 13 10.4C8 9.8 3.4 11 0.4 13Z" fill="url(#edgeA)" />
        <path d="M0.4 13.4C3 7.6 9.6 6.8 13.6 8.6C16.6 10 18.4 12.6 18.4 15.4C17 12.8 13.4 13 11.8 16.4C9.8 21 13.6 27.4 19.4 28.8C15 30.2 9.6 30 5.6 26.4C1.4 22.8 0 18.2 0.4 13.4Z" fill="url(#edgeB)" />
        <path d="M11.8 16.4C9.8 21 13.6 27.6 19 28.8C23.4 27.8 26.4 25 28 21.8C25 24 20 24.4 16.4 22.2C13.4 20.4 12.8 18 11.8 16.4Z" fill="#0b4f98" />
      </svg>
    ),
  },
  {
    id: "store",
    icon: (
      <svg width="30" height="30" viewBox="0 0 30 30">
        <path d="M8.6 6V1.4H21.4V6" fill="none" stroke="#2fb5ee" strokeWidth="1.8" />
        <path d="M0.6 5H29.4V25.6A4 4 0 0 1 25.4 29.6H4.6A4 4 0 0 1 0.6 25.6Z" fill="#f1f1f1" />
        <rect x="9.6" y="11.4" width="5" height="5" fill="#f25022" />
        <rect x="15.6" y="11.4" width="5" height="5" fill="#7fba00" />
        <rect x="9.6" y="17.4" width="5" height="5" fill="#00a4ef" />
        <rect x="15.6" y="17.4" width="5" height="5" fill="#ffb900" />
      </svg>
    ),
  },
  { id: "mcafee", icon: <McAfeeMark color="#c52a2d" className="h-[30px] w-[27px]" /> },
  {
    id: "alexa",
    icon: (
      <svg width="30" height="30" viewBox="0 0 30 30" fill="none">
        <circle cx="15" cy="15" r="12.9" stroke="#00caff" strokeWidth="3.6" />
        <path d="M13.6 29.4V26.4C18.6 24.8 23.4 22.4 26 18.2L26.6 24L15.4 29.8Z" fill="#00caff" />
      </svg>
    ),
  },
  {
    id: "sticky",
    icon: (
      <svg width="30" height="30" viewBox="0 0 30 30">
        <path d="M2.6 1H27.4C28 1 28.4 1.4 28.4 2V15.4L15.4 28.6H2.6C2 28.6 1.6 28.2 1.6 27.6V2C1.6 1.4 2 1 2.6 1Z" fill="#ffd60a" />
        <path d="M15.4 15.2H28.4L15.4 28.6Z" fill="#3a3a3c" />
        <path d="M28.4 15.2V27.6C28.4 28.2 28 28.6 27.4 28.6H15.4Z" fill="#f2a50c" />
      </svg>
    ),
  },
  {
    id: "outlook",
    tile: "bg-[#7f444a]",
    dot: "bg-[#ff99a4]",
    icon: (
      <div className="relative">
        <svg width="30" height="30" viewBox="0 0 30 30">
          <path d="M9 12L18 4L29.4 11V27C29.4 28.6 28.4 29.6 26.8 29.6H6.4C4.8 29.6 4 28.6 4 27Z" fill="#1b87d6" />
          <path d="M29.4 12V27C29.4 28.6 28.4 29.6 26.8 29.6H8L29.4 14Z" fill="#4fc8f4" />
          <path d="M10 5L18 1L26 6V15L18 20L10 15Z" fill="#134a8c" />
          <rect x="0" y="8" width="15.4" height="15.4" rx="1.4" fill="#1066bf" />
          <ellipse cx="7.7" cy="15.7" rx="3.7" ry="4.3" fill="none" stroke="#fff" strokeWidth="2.2" />
        </svg>
        <span className="absolute -right-[6px] -top-[7px] flex size-5 items-center justify-center rounded-full bg-[#60cdff]">
          <svg width="13" height="13" viewBox="0 0 13 13" fill="none" stroke="#10222c" strokeWidth="1.2">
            <rect x="1" y="1" width="11" height="11" rx="1" />
            <path d="M1 4L6.5 7.8L12 4" />
          </svg>
        </span>
      </div>
    ),
  },
  {
    id: "browser",
    tile: "border border-[#3c3a3a] bg-[#322e2e]",
    dot: "w-5 bg-[#4cc2ff]",
    icon: (
      <svg width="30" height="30" viewBox="0 0 30 30">
        <defs>
          <linearGradient id="waveA" x1="0" y1="0" x2="1" y2="0.6">
            <stop offset="0" stopColor="#17c7f0" />
            <stop offset="0.5" stopColor="#0c7fb8" />
            <stop offset="1" stopColor="#0b3f55" />
          </linearGradient>
          <linearGradient id="waveB" x1="0" y1="1" x2="1" y2="0">
            <stop offset="0" stopColor="#19b9d6" />
            <stop offset="1" stopColor="#6ff2c2" />
          </linearGradient>
        </defs>
        <circle cx="15" cy="15" r="14.2" fill="url(#waveA)" />
        <path d="M14 1C20 0 27.6 3.6 29 12C26 11.6 24.6 15 21.6 16C20.6 11 15 9 14 1Z" fill="#0b4257" />
        <path d="M3 23.4C10 24.4 17 20.6 20 12.4C20.8 14.6 20.6 17.4 19.8 19C23.6 17.6 24.6 13.4 29.2 13.2C30 22 24 29.2 15 29.2C10 29.2 5.6 27 3 23.4Z" fill="url(#waveB)" />
        <path d="M1.8 20C8 20 13.4 16 14.4 7.4C16 14.6 12.6 21.6 3.2 23.4Z" fill="#e2fcff" opacity="0.7" />
      </svg>
    ),
  },
  {
    id: "discord",
    tile: "bg-[#7f444a]",
    dot: "bg-[#ff99a4]",
    icon: (
      <div className="relative">
        <span className="flex size-[31px] items-center justify-center rounded-full bg-[#5865f2]">
          <FaDiscord className="size-[21px] text-white" />
        </span>
        <span className="absolute -right-[5px] -top-[5px] flex size-[18px] items-center justify-center rounded-full bg-[#e84549] text-[12.5px] leading-none tracking-[-0.6px] text-white">9+</span>
      </div>
    ),
  },
  {
    id: "vscode",
    dot: "bg-[#9c9fa0]",
    icon: (
      <svg width="30" height="30" viewBox="0 0 30 30">
        <path d="M22.4 7.6V0.6L0.8 18.6C0.4 19 0.4 19.6 0.8 20L2.8 21.6C3.2 22 3.8 22 4.2 21.6Z" fill="#0e70b8" />
        <path d="M22.4 29.6L0.8 11.6C0.4 11.2 0.4 10.6 0.8 10.2L2.8 8.6C3.2 8.2 3.8 8.2 4.2 8.6L22.4 22.6Z" fill="#1a86cf" />
        <path d="M22.4 0.6L29 3.6V26.4L22.4 29.6Z" fill="#2fa0ec" />
      </svg>
    ),
  },
  {
    id: "settings",
    dot: "bg-[#9c9fa0]",
    icon: (
      <svg width="30" height="30" viewBox="0 0 30 30">
        <path d="M11.8 0.8H18.2L19.4 4.8L22.4 6.4L26.6 5.4L29.6 10.8L26.8 13.8V16.2L29.6 19.2L26.6 24.6L22.4 23.6L19.4 25.2L18.2 29.2H11.8L10.6 25.2L7.6 23.6L3.4 24.6L0.4 19.2L3.2 16.2V13.8L0.4 10.8L3.4 5.4L7.6 6.4L10.6 4.8Z" fill="#7f8890" />
        <circle cx="15" cy="15" r="7" fill="#eef1f3" />
        <circle cx="15" cy="15" r="4.9" fill="#1460b4" />
      </svg>
    ),
  },
  {
    id: "whatsapp",
    dot: "bg-[#9c9fa0]",
    icon: (
      <div className="relative">
        <FaWhatsapp className="size-[34px] text-[#22cf64]" />
        <span className="absolute -right-[7px] -top-[6px] flex h-[21px] w-[26px] items-center justify-center rounded-full bg-[#4cc2ff] text-[15px] leading-none tracking-[-0.9px] text-[#0b1a22]">76</span>
      </div>
    ),
  },
  {
    id: "cloud",
    dot: "bg-[#9c9fa0]",
    icon: (
      <svg width="30" height="24" viewBox="0 0 30 24">
        <path d="M7 22.4C3.4 22.4 1 20 1 16.8C1 14 2.8 12 5.2 11.4C5 5.4 9 1.4 14.4 1.4C19 1.4 22.4 4 23.2 8.4C26.8 8.8 29 11.6 29 15.2C29 19.4 26.4 22.4 22.6 22.4Z" fill="#f5f9fc" stroke="#1a86d2" strokeWidth="1.8" />
        <path d="M8.4 23.4V17C8.4 13 11 10.4 15 10.4C19 10.4 21.6 13 21.6 17V23.4Z" fill="#1c2c30" />
        <path d="M9.4 22.4V17C9.4 13.6 11.6 11.4 15 11.4C18.4 11.4 20.6 13.6 20.6 17V22.4" stroke="#1a6fae" strokeWidth="1.6" fill="none" />
        <path d="M13 15.4H17V20L18.8 23.4H11.2L13 20Z" fill="#9b9c9e" />
      </svg>
    ),
  },
  {
    id: "terminal",
    dot: "bg-[#9c9fa0]",
    icon: (
      <svg width="30" height="24" viewBox="0 0 30 24">
        <rect width="30" height="24" rx="1.6" fill="#343434" />
        <path d="M1.6 0H28.4A1.6 1.6 0 0 1 30 1.6V4H0V1.6A1.6 1.6 0 0 1 1.6 0Z" fill="#b9b9b9" />
        <path d="M21 0H28.4A1.6 1.6 0 0 1 30 1.6V4H21Z" fill="#777" />
        <path d="M4.6 8.4L9.6 13.6L4.6 19" fill="none" stroke="#c9c9c9" strokeWidth="3" />
        <rect x="13" y="17.4" width="10" height="2.8" fill="#efefef" />
      </svg>
    ),
  },
  {
    id: "notepad",
    dot: "bg-[#9c9fa0]",
    icon: (
      <svg width="24" height="31" viewBox="0 0 24 31">
        <rect x="1" y="26" width="22" height="4.6" rx="1" fill="#b4571a" />
        <rect x="1" y="25.4" width="22" height="3" fill="#f0f0f0" />
        <rect x="1" y="2.4" width="22" height="24" rx="1" fill="#4fbfdc" />
        <path d="M3.6 0.6V4M7.8 0.6V4M12 0.6V4M16.2 0.6V4M20.4 0.6V4" stroke="#1a7ca0" strokeWidth="1.8" />
        <path d="M5 10H19M5 15H19M5 20H15" stroke="#10607f" strokeWidth="1.9" />
      </svg>
    ),
  },
  {
    id: "acrobat",
    dot: "bg-[#9c9fa0]",
    icon: (
      <svg className="-mt-[2px]" width="28" height="28" viewBox="0 0 28 28">
        <rect width="28" height="28" rx="5" fill="#b30b00" />
        <path d="M13.6 6C12 6 12.4 9.6 13.6 12C14.8 15 17.8 18 20.6 18.6C22.6 18.8 22.4 16.6 20 16.2C15.6 15.6 10.8 17 8 18.6C5.8 20.2 7.4 21.6 9 19.6C11 17 13.4 13 14.2 10C14.8 7.6 14.6 6 13.6 6Z" fill="none" stroke="#fff" strokeWidth="1.4" />
      </svg>
    ),
  },
];

function Taskbar() {
  return (
    <div className="flex h-[60px] shrink-0 border-t border-[#474a49] bg-[linear-gradient(90deg,#20241d_0,#262619_110px,#252419_200px,#1f2621_300px,#20261d_375px,#1b2a26_460px,#172c2f_560px,#1a2d31_760px,#1f2b2e_860px,#272528_930px,#2c201c_1070px,#262522_1120px,#1b2d2f_1200px,#192c31_1460px,#1d3134_1530px,#292c2b_1600px,#1d3033_1720px,#1c3134_1810px,#252b2b_1920px)] text-white">
      <div className="w-[370.5px] shrink-0 pl-[26px] pt-[7px]">
        <div className="relative w-[34px]">
          <svg width="34" height="36" viewBox="0 0 34 36">
            <path d="M26 14C29.4 20 27 34 14 35C8 35 3.4 31.6 2.6 27C8 30 17 27.4 20 20Z" fill="#f59a23" />
            <path d="M3.6 19.6C1.2 19.6 0 18 0 16.2C0 14 1.6 12.8 3.4 12.6C4 9.4 6 7.6 8.8 7.6C11.6 7.6 13.6 9.4 14.2 12L18 14V19.6Z" fill="#9ebcf2" />
            <path d="M15.6 34.4C13.6 34.4 12.6 33 12.6 31.4C12.6 29.6 14 28.4 15.8 28.4C16.6 25.6 18.4 24 21 24C23.6 24 25.4 25.4 26.2 27.8C28.6 27.8 30 29.2 30 31.2C30 33.2 28.8 34.4 26.8 34.4Z" fill="#a5c3f7" />
          </svg>
          <span className="absolute left-[14px] top-0 flex size-5 items-center justify-center rounded-full bg-[#ff99a4] pt-px text-[14px] leading-none text-[#2a1013]">1</span>
        </div>
      </div>
      <div className="flex">
        {apps.map((app) => (
          <div key={app.id} className="flex w-[55.1px] flex-col items-center pt-1">
            <div className={`flex h-[50px] w-[50px] flex-col items-center rounded-[6px] ${app.tile ?? ""}`}>
              <div className="flex h-[50px] shrink-0 items-center justify-center">{app.icon}</div>
              {app.dot && <span className={`-mt-[5px] h-1 shrink-0 rounded-full ${app.dot.includes("w-5") ? "" : "w-2"} ${app.dot}`} />}
            </div>
          </div>
        ))}
      </div>
      <div className="ml-auto flex items-center pb-[1px] text-[14.8px]">
        <svg width="16" height="10" viewBox="0 0 16 10" fill="none" stroke="#f2f2f2" strokeWidth="2" strokeLinecap="round" strokeLinejoin="round">
          <path d="M2 8.4L8 2.2L14 8.4" />
        </svg>
        <svg className="ml-[21px] mt-[3px]" width="22" height="18" viewBox="0 0 22 18">
          <path d="M3.6 13.6C1.4 13.4 0.4 12 0.4 10.2C0.4 8.2 1.8 7 3.6 6.8C4.4 3 7 1 10 1C13.2 1 15.4 2.8 16.2 5.6C18.6 6 20 8 20 10.4L12 13.6Z" fill="#9b9b9b" />
          <path d="M3.6 13.6C1.4 13.4 0.4 12 0.4 10.2C0.4 8.2 1.8 7 3.6 6.8C6 5.4 9 6.4 13 10L10 13.6Z" fill="#dcdcdc" />
          <circle cx="14.8" cy="12" r="5.6" fill="#d5202f" />
          <path d="M12.6 9.8L17 14.2M17 9.8L12.6 14.2" stroke="#fff" strokeWidth="1.5" />
        </svg>
        <div className="ml-[22px] flex w-[30px] flex-col items-center leading-[20px]">
          <span className="tracking-[-0.25px]">ENG</span>
          <span>IN</span>
        </div>
        <svg className="ml-[21px]" width="22" height="18" viewBox="0 0 22 18" fill="none" stroke="#f2f2f2" strokeWidth="1.6">
          <path d="M1.4 7.2A13.6 13.6 0 0 1 20.6 7.2M4.2 10A9.6 9.6 0 0 1 17.8 10M7 12.8A5.7 5.7 0 0 1 15 12.8" />
          <circle cx="11" cy="15.4" r="1.8" fill="#f2f2f2" stroke="none" />
        </svg>
        <svg className="ml-[9px]" width="22" height="20" viewBox="0 0 22 20" fill="none" stroke="#f2f2f2" strokeWidth="1.5" strokeLinecap="round" strokeLinejoin="round">
          <path d="M1 7H4.4L9 2.8V17.2L4.4 13H1ZM12 7.4A4.4 4.4 0 0 1 12 12.6M14.6 5A8 8 0 0 1 14.6 15M17.4 2.6A12 12 0 0 1 17.4 17.4" />
        </svg>
        <svg className="-mt-[2px] ml-[8px]" width="22" height="20" viewBox="0 0 22 20" fill="none" stroke="#f2f2f2" strokeWidth="1.5" strokeLinejoin="round">
          <path d="M12 5H15.4C17 5 18 6 18 7.4V14C18 15.6 17 16.4 15.4 16.4H2.6V14M18 8.6H20V12.8H18" />
          <path d="M1.2 11.4C-0.4 7 2 3 8.4 0.6C10.6 5.6 9.2 10.6 4.6 11.6L2.4 14.4Z" fill="#f2f2f2" stroke="none" />
        </svg>
        <div className="ml-[17px] flex w-[80px] flex-col items-end leading-[20px]">
          <span className="tracking-[-0.27px]">02:09</span>
          <span className="tracking-[0.08px]">06-10-2024</span>
        </div>
        <svg className="ml-[10px] mr-[25px] mt-[1px]" width="18" height="20" viewBox="0 0 18 20" fill="#99e6ff">
          <path d="M9 0.6C5 0.6 2.6 3.4 2.6 7V11.4L0.8 15V16H17.2V15L15.4 11.4V7C15.4 3.4 13 0.6 9 0.6ZM6 17H12C11.6 20 6.4 20 6 17Z" />
        </svg>
      </div>
    </div>
  );
}

export default function App() {
  return (
    <div className="flex h-[1036px] w-[1920px] flex-col overflow-hidden bg-black font-['Noto_Sans',sans-serif]">
      <TabStrip />
      <Toolbar />
      <BookmarksBar />
      <div className="relative flex h-[869px] shrink-0">
        <Sidebar />
        <Conversation />
        <SidePanel />
        <ContactDialog />
        <FloatingWidget />
      </div>
      <Taskbar />
    </div>
  );
}
